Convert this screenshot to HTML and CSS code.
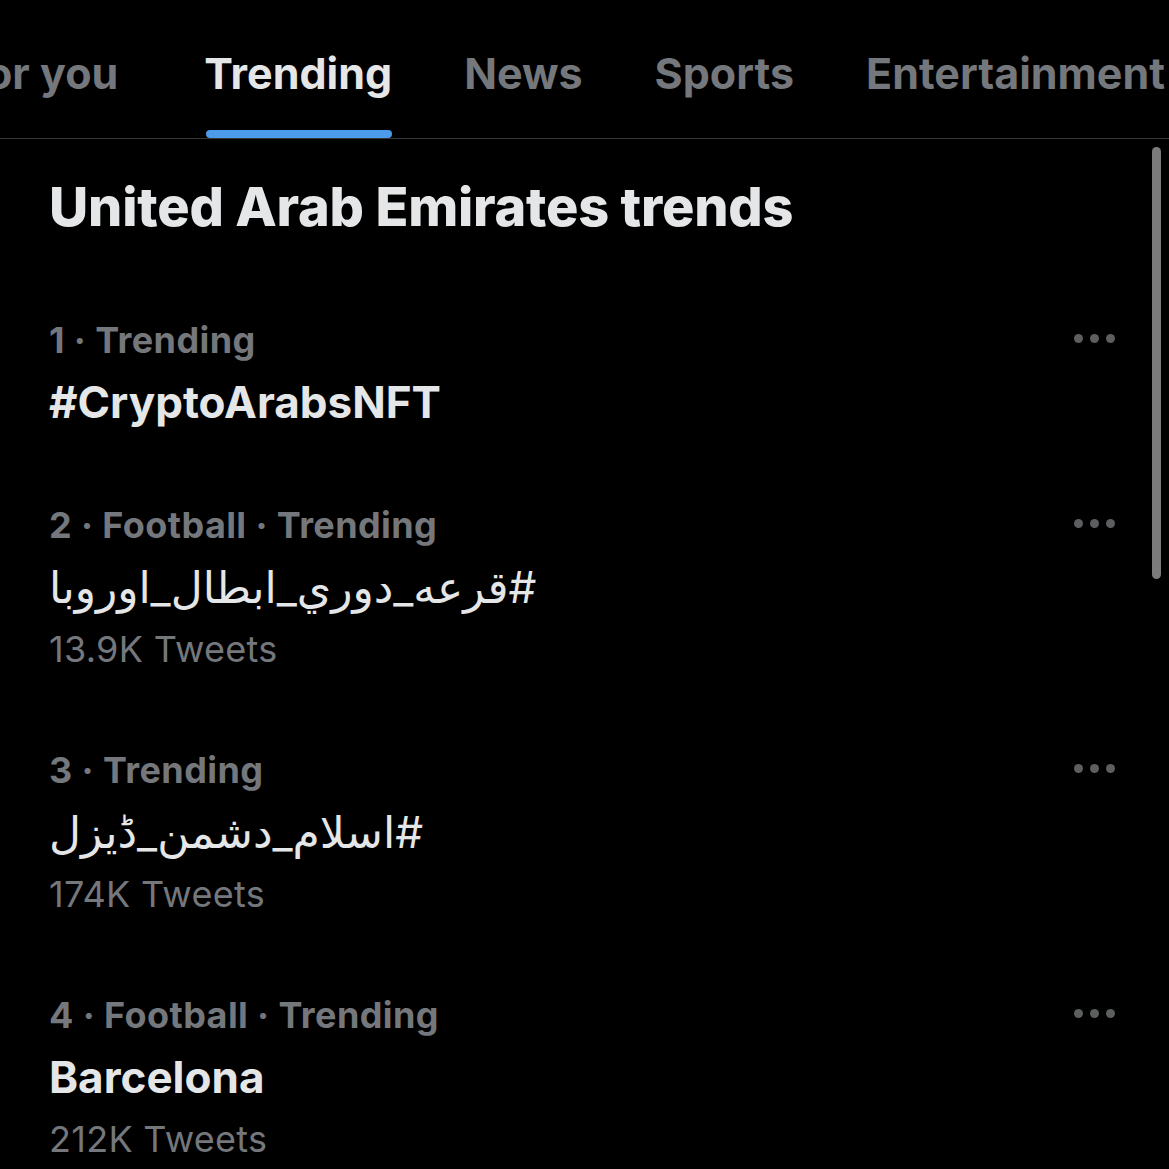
FILE: index.html
```html
<!DOCTYPE html>
<html lang="en">
<head>
  <meta charset="UTF-8">
  <meta name="viewport" content="width=device-width, initial-scale=1.0">
  <title>Trending</title>
  <link rel="stylesheet" href="styles.css">
</head>
<body>
  <!-- Tabs -->
  <nav class="tabs-wrap">
    <div class="tabs">
      <a class="tab first" href="#"><span class="tab-label">For you</span></a>
      <a class="tab active" href="#"><span class="tab-label">Trending</span></a>
      <a class="tab" href="#"><span class="tab-label">News</span></a>
      <a class="tab" href="#"><span class="tab-label">Sports</span></a>
      <a class="tab" href="#"><span class="tab-label">Entertainment</span></a>
    </div>
  </nav>

  <main class="content">
    <h1 class="section-title">United Arab Emirates trends</h1>

    <div class="trend">
      <div class="trend-body">
        <div class="trend-meta">1 · Trending</div>
        <div class="trend-name">#CryptoArabsNFT</div>
      </div>
      <div class="more"><span></span><span></span><span></span></div>
    </div>

    <div class="trend">
      <div class="trend-body">
        <div class="trend-meta">2 · Football · Trending</div>
        <div class="trend-name"><span class="rtl" dir="rtl">#قرعه_دوري_ابطال_اوروبا</span></div>
        <div class="trend-count">13.9K Tweets</div>
      </div>
      <div class="more"><span></span><span></span><span></span></div>
    </div>

    <div class="trend">
      <div class="trend-body">
        <div class="trend-meta">3 · Trending</div>
        <div class="trend-name"><span class="rtl" dir="rtl">#اسلام_دشمن_ڈیزل</span></div>
        <div class="trend-count">174K Tweets</div>
      </div>
      <div class="more"><span></span><span></span><span></span></div>
    </div>

    <div class="trend">
      <div class="trend-body">
        <div class="trend-meta">4 · Football · Trending</div>
        <div class="trend-name">Barcelona</div>
        <div class="trend-count">212K Tweets</div>
      </div>
      <div class="more"><span></span><span></span><span></span></div>
    </div>

    <!-- Scrollbar -->
    <div class="scrollbar"></div>
  </main>
</body>
</html>
```

FILE: styles.css
```css
/* Reset */
* {
  margin: 0;
  padding: 0;
  box-sizing: border-box;
}

body {
  font-family: Inter, "DejaVu Sans", sans-serif;
  background-color: #000;
  color: #e4e6e7;
  height: 1169px;
  overflow: hidden;
}

/* Tabs */
.tabs-wrap {
  overflow: hidden;
  border-bottom: 1px solid #333537;
}

.tabs {
  display: flex;
  gap: 72px;
  margin-left: -38px;
  white-space: nowrap;
}

.tab {
  display: flex;
  flex-direction: column;
  padding-top: 43px;
  color: #74777b;
  text-decoration: none;
  font-size: 43px;
  font-weight: 700;
  line-height: 60px;
}

.tab.first {
  margin-right: 14px;
}

.tab::after {
  content: "";
  height: 8px;
  margin-top: 27px;
  margin-left: 2px;
  border-radius: 4px;
}

.tab.active {
  color: #e4e6e7;
}

.tab.active::after {
  background-color: #4c9be8;
}

/* Content */
.content {
  position: relative;
  padding: 36px 54px 0 49px;
}

.section-title {
  font-size: 54px;
  font-weight: 800;
  line-height: 64px;
  letter-spacing: -0.2px;
  margin-bottom: 41px;
}

.trend {
  display: flex;
  justify-content: space-between;
  padding: 30px 0 31px;
}

.trend-meta {
  color: #74777b;
  font-size: 36px;
  font-weight: 700;
  line-height: 60px;
  letter-spacing: 0.4px;
}

.trend-name {
  font-size: 44px;
  font-weight: 700;
  line-height: 64px;
}

.trend-name .rtl {
  font-size: 44px;
  font-weight: 400;
  letter-spacing: 0.3px;
}

.trend-count {
  color: #74777b;
  font-size: 36px;
  font-weight: 400;
  line-height: 60px;
  letter-spacing: 0.3px;
}

.more {
  display: flex;
  gap: 7px;
  padding-top: 24px;
}

.more span {
  width: 9px;
  height: 9px;
  border-radius: 50%;
  background-color: #5c5e60;
}

.scrollbar {
  position: absolute;
  top: 8px;
  right: 8px;
  width: 9px;
  height: 432px;
  border-radius: 5px;
  background-color: #7b7b7b;
}
```
